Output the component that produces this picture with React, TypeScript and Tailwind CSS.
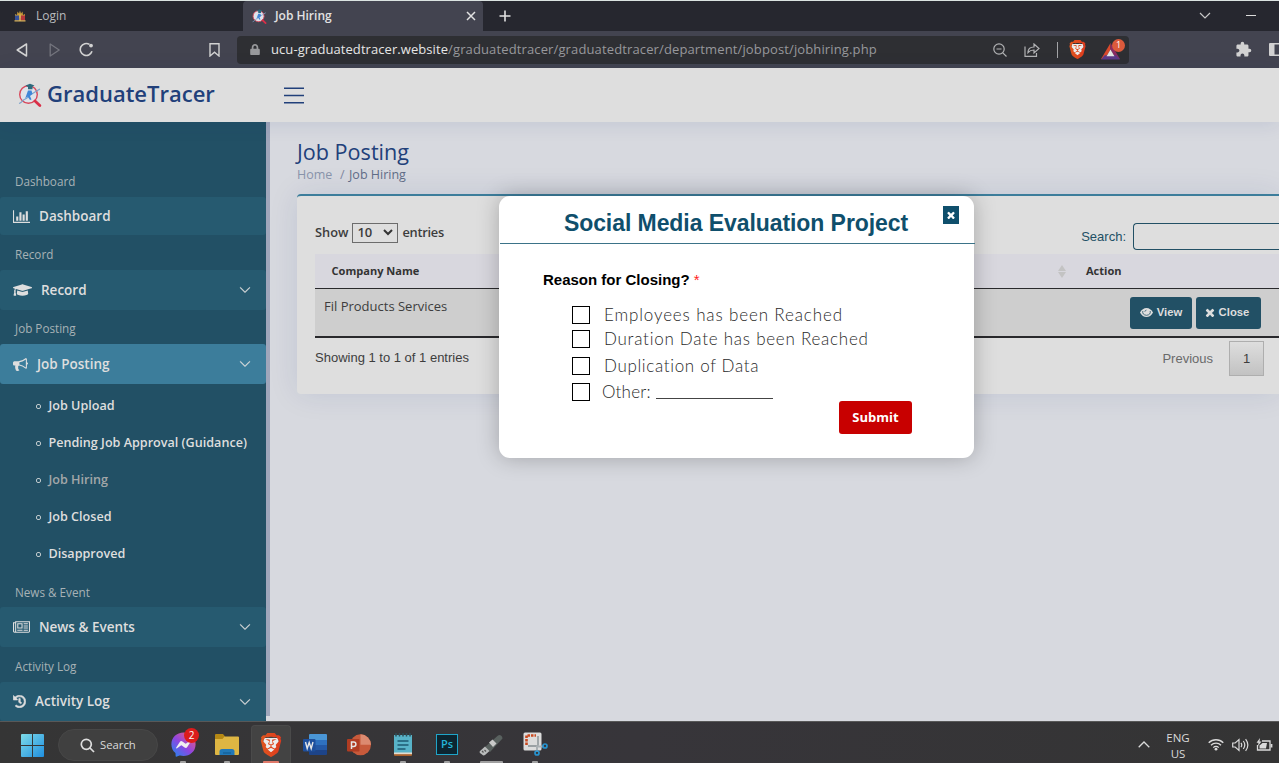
import React from "react";
import { BsChevronDown } from "react-icons/bs";
import { FaFacebookMessenger, FaGraduationCap, FaHistory, FaLock } from "react-icons/fa";
import { MdExtension } from "react-icons/md";
import { SiBrave } from "react-icons/si";

function Glyph({ d, className, box = "0 0 1792 1792" }: { d: string; className: string; box?: string }) {
  return (
    <svg viewBox={box} className={className} fill="currentColor">
      <path d={d} />
    </svg>
  );
}

const BAR_CHART =
  "M640 896v512h-256v-512h256zm384-512v1024h-256v-1024h256zm1024 1152v128h-2048v-1536h128v1408h1920zm-640-896v768h-256v-768h256zm384-384v1152h-256v-1152h256z";
const BULLHORN =
  "M1664 640q53 0 90.5 37.5t37.5 90.5-37.5 90.5-90.5 37.5v384q0 52-38 90t-90 38q-417-347-812-380-58 19-91 66t-31 100.5 40 92.5q-20 33-23 65.5t6 58 33.5 55 48 50 61.5 50.5q-29 58-111.5 83t-168.5 11.5-132-55.5q-7-23-29.5-87.5t-32-94.5-23-89-15-101 3.5-98.5 22-110.5h-122q-66 0-113-47t-47-113v-192q0-66 47-113t113-47h480q435 0 896-384 52 0 90 38t38 90v384zm-128 604v-954q-394 302-768 343v270q377 42 768 341z";
const NEWSPAPER =
  "M1024 512h-384v384h384v-384zm128 640v128h-640v-128h640zm0-768v640h-640v-640h640zm640 768v128h-512v-128h512zm0-256v128h-512v-128h512zm0-256v128h-512v-128h512zm0-256v128h-512v-128h512zm-1536 960v-960h-128v960q0 26 19 45t45 19 45-19 19-45zm1664 0v-1088h-1536v1088q0 33-11 64h1483q26 0 45-19t19-45zm128-1216v1216q0 80-56 136t-136 56h-1664q-80 0-136-56t-56-136v-1088h256v-128h1792z";
const TIMES =
  "M1490 1322q0 40-28 68l-136 136q-28 28-68 28t-68-28l-294-294-294 294q-28 28-68 28t-68-28l-136-136q-28-28-28-68t28-68l294-294-294-294q-28-28-28-68t28-68l136-136q28-28 68-28t68 28l294 294 294-294q28-28 68-28t68 28l136 136q28 28 28 68t-28 68l-294 294 294 294q28 28 28 68z";

function TracerLogo({ className }: { className: string }) {
  return (
    <svg viewBox="0 0 24 24" className={className} fill="none">
      <circle cx="10.500" cy="11.500" r="8.800" stroke="#d8485b" strokeWidth="1.400" fill="#dfe3ea" />
      <path d="M17 18l4.800 4.500" stroke="#d92f48" strokeWidth="2.800" strokeLinecap="round" />
      <path d="M1 20.500c3-.8 4-4.300 6.500-4.500s2.500-4 5-4.500 4-2.500 9.500-5.500" stroke="#7fa3c9" strokeWidth="1.200" />
      <path d="M10 7.500h3.500l1 3.500-2.500 2 1.500 3.500-1.500.5-2.500-3.500-2.500 2.500z" fill="#3f86d8" />
      <path d="M7.500 2.500L12 .8l4.500 1.600-2 1.200v2.600H10V4z" fill="#2c6a7d" />
    </svg>
  );
}

function CrestLogo() {
  return (
    <svg viewBox="0 0 12 12" className="h-3 w-3">
      <path d="M1 4L3 5 3.500 1.500 5 3.500 6 .5l1 3L8.500 1.500 9 5l2-1v4H1z" fill="#c79a38" />
      <rect x="1" y="5.500" width="4.500" height="5" fill="#35509a" />
      <rect x="6.500" y="5.500" width="4.500" height="5" fill="#b5363a" />
      <path d="M.5 10.300h11v1.200H.5zM5.200 4.500h1.600v6H5.200z" fill="#d9b45a" />
    </svg>
  );
}

function Brave({ className, uid }: { className: string; uid: string }) {
  return (
    <span className={`relative inline-flex ${className}`}>
      <svg viewBox="0 0 24 24" className="absolute inset-0 h-full w-full">
        <defs>
          <linearGradient id={uid}>
            <stop offset="0" stopColor="#e0561f" />
            <stop offset="1" stopColor="#dd3a1e" />
          </linearGradient>
        </defs>
        <path d="M5 5h14l1 5-4 9-4 3-4-3-4-9z" fill="#ececec" />
      </svg>
      <SiBrave className="relative h-full w-full" fill={`url(#${uid})`} />
    </span>
  );
}

function TabBar() {
  return (
    <div className="flex h-[31px] items-stretch border-t border-[#dbe3e1] bg-[#26272f] text-[12px] text-[#b9babd]">
      <div className="flex w-[243px] items-center gap-[10px] pl-[14px]">
        <CrestLogo />
        <span>Login</span>
      </div>
      <div className="flex w-[240px] items-center rounded-t-[4px] bg-[#434450] pr-[7px] pl-[9px] font-semibold text-[#e2e2e2]">
        <TracerLogo className="h-[15px] w-[15px]" />
        <span className="ml-[8px] grow">Job Hiring</span>
        <svg viewBox="0 0 10 10" className="h-[10px] w-[10px]" stroke="#e2e2e2" strokeWidth="1.500">
          <path d="M1 1l8 8M9 1l-8 8" />
        </svg>
      </div>
      <div className="flex grow items-center">
        <svg viewBox="0 0 12 12" className="ml-[16px] h-3 w-3" stroke="#e2e2e2" strokeWidth="1.600">
          <path d="M6 .5v11M.5 6h11" />
        </svg>
        <svg viewBox="0 0 12 8" className="ml-auto h-[8px] w-[12px]" fill="none" stroke="#c8c8c8" strokeWidth="1.200">
          <path d="M1 1l5 5 5-5" />
        </svg>
        <svg viewBox="0 0 10 2" className="mr-[23px] ml-[35px] h-[2px] w-[10px]">
          <path d="M0 0h10v1H0z" fill="#dcdcdc" />
        </svg>
      </div>
    </div>
  );
}

function AddressBar() {
  return (
    <div className="flex h-[37px] items-center bg-[#434450]">
      <div className="flex w-[237px] items-center pl-[16px] text-[#d2d2d2]">
        <svg viewBox="0 0 12 14" className="h-[14px] w-[12px]" fill="none" stroke="currentColor" strokeWidth="1.500" strokeLinejoin="round">
          <path d="M10.500 1v12L1.200 7z" />
        </svg>
        <svg viewBox="0 0 12 14" className="ml-[21px] h-[14px] w-[12px] text-[#74757e]" fill="none" stroke="currentColor" strokeWidth="1.300" strokeLinejoin="round">
          <path d="M1.200 1v12l9-6z" />
        </svg>
        <svg viewBox="0 0 15 15" className="ml-[18px] h-[15px] w-[15px]" fill="none" stroke="currentColor" strokeWidth="1.600">
          <path d="M13 9.300A6 6 0 1 1 10.500 2.400" />
          <circle cx="12" cy="3.600" r="1.900" fill="currentColor" stroke="none" />
        </svg>
        <svg viewBox="0 0 11 14" className="ml-[115px] h-[14px] w-[11px]" fill="none" stroke="currentColor" strokeWidth="1.400">
          <path d="M1 .8h9v12.200L5.500 9.200 1 13z" />
        </svg>
      </div>
      <div className="flex h-[28px] w-[892px] items-center rounded-[4px] bg-[#2e2f33] pr-[4px] pl-[13px]">
        <FaLock className="h-[11px] w-[10px] text-[#98999c]" />
        <span className="ml-[11px] text-[13px] tracking-[0.070px] text-[#e6e6e6]">ucu-graduatedtracer.website</span>
        <span className="grow text-[13px] tracking-[0.130px] text-[#97989c]">
          /graduatedtracer/graduatedtracer/department/jobpost/jobhiring.php
        </span>
        <svg viewBox="0 0 14 14" className="h-[14px] w-[14px]" fill="none" stroke="#b2b3b5" strokeWidth="1.200">
          <circle cx="6" cy="6" r="5.200" />
          <path d="M3.500 6h5M9.800 9.800l3.700 3.700" />
        </svg>
        <svg viewBox="0 0 16 14" className="ml-[17px] h-[14px] w-[16px]" fill="none" stroke="#b2b3b5" strokeWidth="1.200">
          <path d="M1 3.500v9.800h11.500V10M4 9.500c0-3.500 2-5.500 6-5.500V1l5 4.500L10 10V7c-3 0-4.500.7-6 2.500z" />
        </svg>
        <i className="ml-[17px] h-[16px] w-px bg-[#a3a4a7]" />
        <Brave uid="brave-shield" className="ml-[10px] h-[19px] w-[19px]" />
        <span className="relative ml-[14px] flex h-[20px] w-[24px] items-end">
          <svg viewBox="0 0 20 18" className="h-[17px] w-[19px]">
            <path d="M10 0L0 17h4l6-10z" fill="#d9492c" />
            <path d="M10 0l10 17h-4L10 7z" fill="#8b2a63" />
            <path d="M0 17.500h20l-4-4.500H4z" fill="#5b3a87" />
            <path d="M10 7l4.200 7H5.800z" fill="#e4e4e4" />
          </svg>
          <b className="absolute top-[-1px] right-0 flex h-[13px] w-[13px] items-center justify-center rounded-full bg-[#dc5a3c] text-[9px] font-normal text-white">
            1
          </b>
        </span>
      </div>
      <MdExtension className="ml-[106px] h-[17px] w-[17px] text-[#d2d2d2]" />
      <svg viewBox="0 0 10 13" className="ml-auto h-[13px] w-[10px]" fill="#d2d2d2">
        <path d="M1 0h9v1.500H5.500v10H10V13H1q-1 0-1-1V1q0-1 1-1z" />
      </svg>
    </div>
  );
}

function Section({ label, tall }: { label: string; tall?: boolean }) {
  return (
    <div className={tall ? "h-[75px] pt-[50px] pl-[15px]" : "h-[35px] pt-[10px] pl-[15px]"}>
      <p className="text-[11.700px] leading-[18px] text-[#a7b2b6]">{label}</p>
    </div>
  );
}

function NavItem({ label, icon, active, height = "h-[40px]", toggle = true, gap }: { label: string; icon: React.ReactNode; active?: boolean; height?: string; toggle?: boolean; gap: string }) {
  return (
    <div className={`flex items-center rounded-[3px] pr-[15px] pl-[13px] text-[#dedede] ${height} ${active ? "bg-[#3c7d9b]" : "bg-[#265a70]"}`}>
      {icon}
      <span className={`grow text-[13.500px] font-semibold ${gap}`}>{label}</span>
      {toggle && <BsChevronDown className="h-[12px] w-[12px]" strokeWidth="0.600" />}
    </div>
  );
}

const SUB_LINKS = ["Job Upload", "Pending Job Approval (Guidance)", "Job Hiring", "Job Closed", "Disapproved"];

function Sidebar() {
  return (
    <aside className="flex w-[270px] shrink-0">
      <nav className="w-[266px] bg-[#225065]">
        <Section label="Dashboard" tall />
        <NavItem label="Dashboard" height="h-[38px]" toggle={false} gap="ml-[9px]" icon={<Glyph d={BAR_CHART} box="0 0 2048 1792" className="h-[15px] w-[17px]" />} />
        <Section label="Record" />
        <NavItem label="Record" gap="ml-[9px]" icon={<FaGraduationCap className="h-[18px] w-[19px]" />} />
        <div className="-mt-px">
          <Section label="Job Posting" />
        </div>
        <NavItem label="Job Posting" active gap="ml-[9px]" icon={<Glyph d={BULLHORN} className="h-[15px] w-[15px]" />} />
        <ul className="pt-[3px]">
          {SUB_LINKS.map((s) => (
            <li key={s} className="flex h-[37px] items-center pt-px pl-[36px]">
              <i className="mt-px h-[5px] w-[5px] rounded-[2px] border border-[#c0cacd]" />
              <span className={`ml-[7.500px] text-[12.600px] font-semibold whitespace-nowrap ${s === "Job Hiring" ? "text-[#a3a7a9]" : "text-[#dedede]"}`}>
                {s}
              </span>
            </li>
          ))}
        </ul>
        <div className="mb-[-1px] pt-px">
          <Section label="News & Event" />
        </div>
        <NavItem label="News & Events" gap="ml-[9px]" icon={<Glyph d={NEWSPAPER} box="0 0 2048 1792" className="h-[15px] w-[17px]" />} />
        <Section label="Activity Log" />
        <NavItem label="Activity Log" height="h-[39px]" gap="ml-[9px]" icon={<FaHistory className="h-[13px] w-[13px]" stroke="currentColor" strokeWidth="20" />} />
      </nav>
      <i className="h-[594px] w-[4px] bg-[#9fa6bb]" />
    </aside>
  );
}

function ActionButton({ icon, label, className }: { icon: React.ReactNode; label: string; className: string }) {
  return (
    <button className={`flex h-[32px] items-center justify-center gap-[4px] rounded-[3px] bg-[#225065] pb-px font-['Liberation_Sans',sans-serif] text-[11.300px] font-bold text-[#dedede] ${className}`}>
      {icon}
      {label}
    </button>
  );
}

function EyeIcon() {
  return (
    <svg viewBox="0 0 13 9" className="h-[9px] w-[13px]" fill="#dedede">
      <path d="M0 4.500Q2.500 0 6.500 0T13 4.500Q10.500 9 6.500 9T0 4.500z" />
      <path d="M2.800 3Q2 6.800 6.500 7.300 11 6.800 10.200 3" fill="none" stroke="#225065" strokeWidth=".8" />
      <path d="M4.800 3.800Q5 2.200 6.500 2.100" fill="none" stroke="#225065" strokeWidth=".7" />
    </svg>
  );
}

function JobTable() {
  return (
    <section className="ml-[27px] h-[200px] rounded-l-[4px] border-t-2 border-[#3c7d9b] bg-[#dedede] pl-[18px] shadow-[0_0_30px_rgba(1,41,112,0.100)]">
      <div className="flex h-[58px] items-center text-[#3c3c3c]">
        <div className="flex grow items-center pt-[15px] text-[12.800px] font-semibold">
          <span>Show</span>
          <span className="mr-[4px] ml-[4px] flex h-[20px] w-[46px] items-center justify-between border border-[#6c6c6c] pr-[4px] pl-[4px] text-[13px]">
            10
            <svg viewBox="0 0 10 7" className="h-[7px] w-[10px]" fill="none" stroke="#333" strokeWidth="2">
              <path d="M1 1l4 4 4-4" />
            </svg>
          </span>
          <span className="tracking-[-0.250px]">entries</span>
        </div>
        <label className="flex items-center pt-[23px] font-['Liberation_Sans',sans-serif] text-[13px] text-[#225065]">
          Search:
          <span className="ml-[7px] h-[27px] w-[146px] rounded-l-[4px] border border-r-0 border-[#225065]" />
        </label>
      </div>
      <div className="flex h-[34px] items-center bg-[#d8d7de] text-[11.050px] font-bold text-[#333]">
        <span className="w-[743px] pl-[16.500px]">Company Name</span>
        <svg viewBox="0 0 8 13" className="h-[13px] w-[8px]" fill="#c3c3c3">
          <path d="M4 0l4 6H0zM0 7h8l-4 6z" />
        </svg>
        <span className="ml-[20px]">Action</span>
      </div>
      <div className="flex h-[50px] items-start border-t border-b-2 border-[#29292c] bg-[#cecece]">
        <span className="grow pt-[8px] pl-[9px] text-[13px] text-[#3d3d3d]">Fil Products Services</span>
        <ActionButton className="mt-[8px] w-[62px]" label="View" icon={<EyeIcon />} />
        <ActionButton className="mt-[8px] mr-[18px] ml-[4px] w-[65px] pr-[3px]" label="Close" icon={<Glyph d={TIMES} box="250 250 1292 1292" className="h-[9px] w-[10px]" />} />
      </div>
      <div className="flex items-center pt-[3px] font-['Liberation_Sans',sans-serif] text-[13px] text-[#3d3d3d]">
        <span className="grow pb-[2px]">Showing 1 to 1 of 1 entries</span>
        <span className="text-[#6a6a6a]">Previous</span>
        <span className="mr-[15px] ml-[16px] flex h-[35px] w-[35px] items-center justify-center border border-[#aeaeae] bg-linear-to-b from-[#dedede] to-[#c2c2c2]">
          1
        </span>
      </div>
    </section>
  );
}

const REASONS: [string, string][] = [
  ["Employees has been Reached", "h-[24px] tracking-[0.860px]"],
  ["Duration Date has been Reached", "h-[27px] pb-[3px] tracking-[0.750px]"],
  ["Duplication of Data", "h-[26px] tracking-[0.660px]"],
];

function CloseReasonDialog() {
  return (
    <div role="dialog" className="absolute top-[196px] left-[499px] h-[262px] w-[475px] rounded-[11px] bg-white shadow-[0_0_22px_rgba(0,0,0,0.250)]">
      <div className="relative -mr-px ml-px flex h-[48px] items-center justify-center border-b border-[#3b7388] pt-[7px] pr-[3px] font-['Liberation_Sans',sans-serif]">
        <h2 className="text-[23px] font-bold tracking-[-0.070px] text-[#0f4f6c]">Social Media Evaluation Project</h2>
        <button className="absolute top-[10px] right-[16px] flex h-[18px] w-[16px] items-center justify-center bg-[#0f4f6c] pb-px text-white">
          <Glyph d={TIMES} box="250 250 1292 1292" className="h-[8px] w-[8px]" />
        </button>
      </div>
      <p className="pt-[25px] pl-[44px] font-['Liberation_Sans',sans-serif] text-[15px] leading-[22px] font-bold text-black">
        Reason for Closing? <span className="font-normal text-[#f22]">*</span>
      </p>
      <ul className="pt-[15px] pl-[73px] font-['Lato',sans-serif] text-[17px] leading-[18px] font-light text-[#2a2a2a]">
        {REASONS.map(([text, cls]) => (
          <li key={text} className={`flex items-start whitespace-nowrap ${cls}`}>
            <i className="h-[18px] w-[18px] shrink-0 border border-black" />
            <span className="ml-[14px]">{text}</span>
          </li>
        ))}
        <li className="flex h-[18px] items-start whitespace-nowrap">
          <i className="h-[18px] w-[18px] shrink-0 border border-black" />
          <span className="ml-[12px] tracking-[0.200px]">Other:</span>
          <span className="mt-[15px] ml-[5px] h-px w-[117px] bg-[#444]" />
        </li>
      </ul>
      <button className="-mt-[0px] ml-[340px] block h-[33px] w-[73px] rounded-[3px] bg-[#c80000] text-[13px] font-bold text-white">Submit</button>
    </div>
  );
}

function Slot({ children, mark, active }: { children: React.ReactNode; mark?: string; active?: boolean }) {
  return (
    <div className="flex w-[44px] shrink-0 justify-center">
      <div className={`relative flex h-[38px] w-[40px] items-center justify-center ${active ? "rounded-t-[4px] border border-b-0 border-[#4a4a4a] bg-[#434343]" : ""}`}>
        {children}
        {mark && <i className={`absolute bottom-0 h-[2px] rounded-t-[1px] ${mark}`} />}
      </div>
    </div>
  );
}

function Taskbar() {
  return (
    <footer className="flex h-[42px] items-end border-t border-[#585858] bg-linear-to-r from-[#353535] via-[#37353a] to-[#343434] text-[#dadada]">
      <div className="ml-[10px]">
        <Slot>
          <svg viewBox="0 0 24 24" className="mt-[2px] h-[23px] w-[23px]">
            <defs>
              <linearGradient id="start" x2="1" y2="1">
                <stop stopColor="#7edbe8" />
                <stop offset="1" stopColor="#1f8fe0" />
              </linearGradient>
            </defs>
            <path d="M0 1q0-1 1-1h10.500v11.500H0zM12.500 0H23q1 0 1 1v10.500H12.500zM0 12.500h11.500V24H1q-1 0-1-1zM12.500 12.500H24V23q0 1-1 1H12.500z" fill="url(#start)" />
          </svg>
        </Slot>
      </div>
      <div className="mb-[2px] ml-[4px] flex h-[32px] w-[100px] items-center rounded-full border border-[#474747] bg-[#404040] pl-[21px] text-[11.300px]">
        <svg viewBox="0 0 15 15" className="mt-px h-[15px] w-[15px]" fill="none" stroke="#dedede" strokeWidth="1.700">
          <circle cx="6.300" cy="6.300" r="5" />
          <path d="M10 10l4 4" />
        </svg>
        <span className="mt-px ml-[5px]">Search</span>
      </div>
      <div className="ml-[3px] flex">
        <Slot mark="w-[6px] bg-[#a0a0a0]">
          <svg width="0" height="0" className="absolute">
            <defs>
              <linearGradient id="msgr" x1="0" y1="1" x2="0.900" y2="0">
                <stop stopColor="#1a8cf0" />
                <stop offset="0.500" stopColor="#8f45e0" />
                <stop offset="1" stopColor="#f06077" />
              </linearGradient>
            </defs>
          </svg>
          <i className="absolute h-[12px] w-[18px] bg-[#f0f0f0]" />
          <FaFacebookMessenger className="relative mt-px h-[25px] w-[25px]" fill="url(#msgr)" />
          <b className="absolute top-[3px] right-[4px] flex h-[15px] w-[15px] items-center justify-center rounded-full bg-[#dc1c1c] text-[10px] font-normal text-white">2</b>
        </Slot>
        <Slot mark="w-[6px] bg-[#a0a0a0]">
          <svg viewBox="0 0 24 22" className="mt-px h-[22px] w-[24px]">
            <path d="M0 1q0-1 1-1h7l2 2.500V8H0z" fill="#b58814" />
            <path d="M0 5h7.500l2-2.500H23q1 0 1 1V20q0 1-1 1H1q-1 0-1-1z" fill="#deb643" />
            <path d="M4.500 21v-3.500q0-2.500 2.500-2.500h10q2.500 0 2.500 2.500V21z" fill="#2178b8" />
            <path d="M8 18.500h8v1H8z" fill="#0f568c" />
          </svg>
        </Slot>
        <Slot active mark="w-[16px] bg-[#e0796a]">
          <Brave uid="brave-task" className="h-[24px] w-[24px]" />
        </Slot>
        <Slot>
          <svg viewBox="0 0 24 22" className="mt-px h-[22px] w-[24px]">
            <path d="M6 1q0-1 1-1h16q1 0 1 1v5H6z" fill="#4a96d6" />
            <path d="M6 6h18v5H6z" fill="#2f71bf" />
            <path d="M6 11h18v5H6z" fill="#2458a5" />
            <path d="M6 16h18v4q0 1-1 1H7q-1 0-1-1z" fill="#1d4489" />
            <rect y="5" width="12.500" height="12.500" rx="1" fill="#1e4f9c" />
            <path d="M2.500 8l1.700 6.500L6.200 8.500l2 6L10 8" stroke="#e6e6e6" strokeWidth="1.400" fill="none" />
          </svg>
        </Slot>
        <Slot>
          <svg viewBox="0 0 24 22" className="mt-px h-[22px] w-[24px]">
            <circle cx="13.500" cy="10.800" r="10.500" fill="#c75a3b" />
            <path d="M13.500.3A10.500 10.500 0 0 1 24 10.800H13.500z" fill="#dc8a70" />
            <rect y="5" width="12.500" height="12.500" rx="1" fill="#b03c22" />
            <path d="M4.500 15V8h2.200a2.200 2.200 0 0 1 0 4.400H4.500" stroke="#e6e6e6" strokeWidth="1.500" fill="none" />
          </svg>
        </Slot>
        <Slot mark="w-[6px] bg-[#a0a0a0]">
          <svg viewBox="0 0 20 24" className="mt-px h-[24px] w-[20px]">
            <path d="M1 2h18v19H1z" fill="#58b3c8" />
            <path d="M1 20.500h18V22q0 1-1 1H2q-1 0-1-1z" fill="#a9602a" />
            <path d="M1 19.500h18v1.700H1z" fill="#e2dccf" />
            <path d="M4.500 8h11M4.500 12h11M4.500 16h8" stroke="#1d5a70" strokeWidth="1.400" />
            <path d="M3 0v3.500M6.500 0v3.500M10 0v3.500M13.500 0v3.500M17 0v3.500" stroke="#2c4d57" strokeWidth="1.500" />
          </svg>
        </Slot>
        <Slot mark="w-[6px] bg-[#a0a0a0]">
          <span className="flex h-[21px] w-[22px] items-center justify-center border-[1.500px] border-[#1fa5c9] bg-[#0d2530] text-[11px] font-semibold text-[#25b4d8]">Ps</span>
        </Slot>
        <Slot mark="w-[23px] bg-[#a0a0a0]">
          <svg viewBox="0 0 24 22" className="mt-px h-[22px] w-[24px]">
            <path d="M6 13L19 1.500q1.500-1 3 0t1.500 3L11 18z" fill="#59615f" />
            <path d="M10 8.500l3.500-3 4 4-3.500 3.500z" fill="#c9c9c9" />
            <path d="M1 17l5-4.500L10.500 17 6 21q-1.500 1-3-.5L1 19q-1-1 0-2z" fill="#b9bbbb" />
            <path d="M3 17l1.500 1.500M5.500 16l1.500 1.500" stroke="#555" strokeWidth="1.200" />
          </svg>
        </Slot>
        <Slot mark="w-[6px] bg-[#a0a0a0]">
          <svg viewBox="0 0 25 24" className="h-[24px] w-[25px]" fill="none">
            <rect x=".5" y=".5" width="18" height="18" rx="1.500" fill="#dcdcdc" />
            <path d="M3.500 13V3.500H13" stroke="#c9481f" strokeWidth="2.600" strokeDasharray="2.500 1" />
            <path d="M15 4v9q0 1-1 1H5" stroke="#9aa0a3" strokeWidth="1.800" />
            <path d="M14 20v-5.500h6" stroke="#aab0b3" strokeWidth="2" />
            <circle cx="14" cy="21" r="2" stroke="#2793cf" strokeWidth="1.700" />
            <circle cx="22" cy="14" r="2" stroke="#2793cf" strokeWidth="1.700" />
          </svg>
        </Slot>
      </div>
      <svg viewBox="0 0 12 7" className="mb-[15px] ml-auto h-[7px] w-[12px]" fill="none" stroke="#dadada" strokeWidth="1.300">
        <path d="M.7 6.300L6 1l5.300 5.300" />
      </svg>
      <p className="mb-[1px] ml-[15px] w-[26px] text-center text-[11.500px] leading-[16px]">
        ENG
        <br />
        US
      </p>
      <svg viewBox="0 0 16 13" className="mb-[12px] ml-[17px] h-[13px] w-[16px]" fill="none" stroke="#dadada" strokeWidth="1.300">
        <path d="M.7 4.800a10.300 10.300 0 0 1 14.600 0M3 7.300a7 7 0 0 1 10 0M5.300 9.600a3.800 3.800 0 0 1 5.400 0" />
        <circle cx="8" cy="11.200" r="1.400" fill="#dadada" stroke="none" />
      </svg>
      <svg viewBox="0 0 17 14" className="mb-[11px] ml-[8px] h-[14px] w-[17px]" fill="none" stroke="#dadada" strokeWidth="1.200">
        <path d="M.7 5v4h2.500L7 12.500v-11L3.200 5zM9 4.800q1.500 2.200 0 4.400M11.300 3q3 4 0 8M13.600 1.200q4.500 5.800 0 11.600" />
      </svg>
      <svg viewBox="0 0 17 13" className="mr-[6px] mb-[12px] ml-[7px] h-[13px] w-[17px]" fill="none" stroke="#dadada" strokeWidth="1.300">
        <path d="M6 3h8v9H1.500V7" />
        <path d="M3.500 7.500L6.500 5H11l-1 5.500H3.500z" fill="#dadada" stroke="none" />
        <path d="M15.500 6v3.500" strokeWidth="1.800" />
        <path d="M4 0L.5 4.800h2L2 8l3.500-4.500h-2z" fill="#dadada" stroke="none" />
      </svg>
    </footer>
  );
}

export default function App() {
  return (
    <div className="relative flex h-[763px] w-[1279px] flex-col overflow-hidden bg-[#d7d9df] font-['Open_Sans','Noto_Sans',sans-serif]">
      <TabBar />
      <AddressBar />
      <header className="relative flex h-[54px] shrink-0 items-center bg-[#dedede] pl-[18px] shadow-[0_2px_20px_rgba(1,41,112,0.100)]">
        <TracerLogo className="h-[24px] w-[24px]" />
        <span className="ml-[5px] w-[236.500px] pb-[3px] text-[22px] font-semibold text-[#21407a]">GraduateTracer</span>
        <svg viewBox="0 0 20 17" className="h-[17px] w-[20px]" stroke="#21407a" strokeWidth="1.500">
          <path d="M0 1.250h20M0 8.500h20M0 15.750h20" />
        </svg>
      </header>
      <div className="flex h-[599px] shrink-0">
        <Sidebar />
        <main className="grow overflow-hidden pt-[15px]">
          <h1 className="ml-[27px] text-[21.600px] leading-[30px] text-[#21407a]">Job Posting</h1>
          <p className="mb-[11px] ml-[27px] flex text-[12.500px] leading-[16px] text-[#5f6c86]">
            <span className="w-[43px] text-[#8893aa]">Home</span>
            <span className="w-[9px] text-[#8088a0]">/</span>
            Job Hiring
          </p>
          <JobTable />
        </main>
      </div>
      <Taskbar />
      <CloseReasonDialog />
    </div>
  );
}
